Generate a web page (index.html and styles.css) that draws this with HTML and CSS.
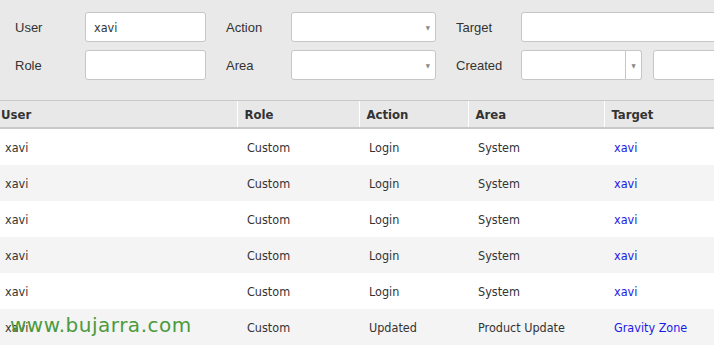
FILE: index.html
```html
<!DOCTYPE html>
<html lang="en">
<head>
    <meta charset="UTF-8">
    <title>Audit Log</title>
    <link rel="stylesheet" href="styles.css">
</head>
<body>

    <div class="filters">
        <div class="filter-row">
            <label class="lbl lbl-first">User</label>
            <div class="field text-field">xavi</div>
            <label class="lbl">Action</label>
            <div class="field select-field"><span class="arrow">&#9660;</span></div>
            <label class="lbl">Target</label>
            <div class="field wide-field"></div>
        </div>
        <div class="filter-row">
            <label class="lbl lbl-first">Role</label>
            <div class="field text-field"></div>
            <label class="lbl">Area</label>
            <div class="field select-field"><span class="arrow">&#9660;</span></div>
            <label class="lbl">Created</label>
            <div class="date-group">
                <div class="field date-field"></div>
                <div class="field date-btn"><span class="arrow">&#9660;</span></div>
            </div>
            <div class="field wide-field"></div>
        </div>
    </div>

    <table class="grid">
        <colgroup>
            <col class="c-user"><col class="c-role"><col class="c-action"><col class="c-area"><col>
        </colgroup>
        <thead>
            <tr><th>User</th><th>Role</th><th>Action</th><th>Area</th><th>Target</th></tr>
        </thead>
        <tbody>
            <tr><td>xavi</td><td>Custom</td><td>Login</td><td>System</td><td><a href="#">xavi</a></td></tr>
            <tr><td>xavi</td><td>Custom</td><td>Login</td><td>System</td><td><a href="#">xavi</a></td></tr>
            <tr><td>xavi</td><td>Custom</td><td>Login</td><td>System</td><td><a href="#">xavi</a></td></tr>
            <tr><td>xavi</td><td>Custom</td><td>Login</td><td>System</td><td><a href="#">xavi</a></td></tr>
            <tr><td>xavi</td><td>Custom</td><td>Login</td><td>System</td><td><a href="#">xavi</a></td></tr>
            <tr><td>xavi</td><td>Custom</td><td>Updated</td><td>Product Update</td><td><a href="#">Gravity Zone</a></td></tr>
        </tbody>
    </table>

    <div class="watermark">www.bujarra.com</div>

</body>
</html>
```

FILE: styles.css
```css
body {
    margin: 0;
    width: 714px;
    height: 348px;
    overflow: hidden;
    position: relative;
    background: white;
    font-family: "DejaVu Sans Condensed", "DejaVu Sans", sans-serif;
    font-size: 12.5px;
    color: #333;
}
.filters {
    background: #e9e9e9;
    padding: 12px 0 20px 15px;
    display: flex;
    flex-direction: column;
    gap: 8px;
    height: 68px;
    overflow: hidden;
}
.filter-row {
    display: flex;
    align-items: center;
    height: 30px;
    white-space: nowrap;
    margin-right: -6px;
}
.lbl {
    font-family: "Liberation Sans", Arial, sans-serif;
    font-size: 13px;
    color: #333;
    width: 65px;
    margin-left: 20px;
    flex-shrink: 0;
}
.lbl-first {
    width: 70px;
    margin-left: 0;
}
.field {
    box-sizing: border-box;
    height: 30px;
    background: white;
    border: 1px solid #c6c6c6;
    border-radius: 3px;
    flex-shrink: 0;
    display: flex;
    align-items: center;
}
.text-field {
    width: 121px;
    padding-left: 8px;
    font-size: 12.5px;
}
.select-field {
    width: 145px;
    justify-content: flex-end;
    padding-right: 5px;
}
.arrow {
    font-size: 6px;
    color: #888;
}
.wide-field {
    flex: 1;
    min-width: 0;
}
.date-group {
    display: flex;
    margin-right: 11px;
}
.date-field {
    width: 105px;
    border-radius: 3px 0 0 3px;
}
.date-btn {
    width: 16px;
    border-left: none;
    border-radius: 0 3px 3px 0;
    justify-content: center;
}
.grid {
    border-collapse: collapse;
    table-layout: fixed;
    width: 714px;
}
.c-user { width: 237px; }
.c-role { width: 122px; }
.c-action { width: 109px; }
.c-area { width: 136px; }
.grid th {
    background: #e8e8e8;
    border-top: 1px solid #c8c8c8;
    border-bottom: 2px solid #c8c8c8;
    border-left: 1px solid white;
    height: 26px;
    padding: 0 0 0 7px;
    text-align: left;
    font-weight: bold;
    font-size: 13px;
    color: #333;
}
.grid th:first-child {
    border-left: none;
    padding-left: 1px;
}
.grid td {
    height: 35px;
    padding: 1px 0 0 10px;
    white-space: nowrap;
}
.grid td:first-child {
    padding-left: 5px;
}
.grid tbody tr:nth-child(even) td {
    background: #f4f4f4;
}
.grid a {
    color: #1a1ae6;
    text-decoration: none;
}
.watermark {
    position: absolute;
    left: 10px;
    top: 313px;
    font-family: "DejaVu Sans", sans-serif;
    font-size: 20px;
    color: #4b9a3c;
    letter-spacing: 0.5px;
}
```
